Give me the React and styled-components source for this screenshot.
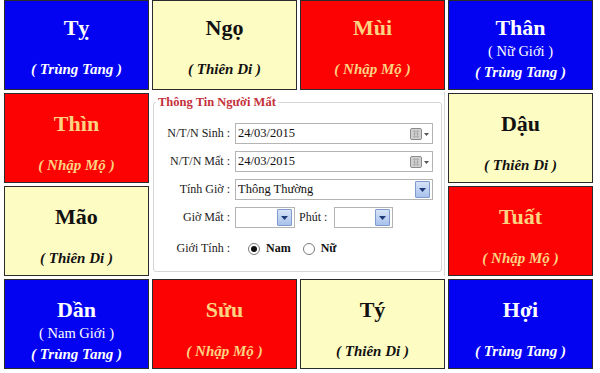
import React from 'react';
import styled, { createGlobalStyle } from 'styled-components';

const serif = '"Liberation Serif", "Times New Roman", "DejaVu Serif", serif';

const GlobalStyle = createGlobalStyle`
  html, body {
    margin: 0;
    padding: 0;
    background: #ffffff;
    font-family: ${serif};
  }
`;

const palette = {
  blue: { bg: '#0303f2', title: '#ffffff', sub: '#ffffff' },
  red: { bg: '#fc0202', title: '#fdd382', sub: '#fdd382' },
  yellow: { bg: '#fdfcc2', title: '#111111', sub: '#111111' },
};

const cells = [
  { name: 'Tỵ', sub: 'Trùng Tang', tone: 'blue', area: '1 / 1' },
  { name: 'Ngọ', sub: 'Thiên Di', tone: 'yellow', area: '1 / 2' },
  { name: 'Mùi', sub: 'Nhập Mộ', tone: 'red', area: '1 / 3' },
  { name: 'Thân', gender: 'Nữ Giới', sub: 'Trùng Tang', tone: 'blue', area: '1 / 4' },
  { name: 'Thìn', sub: 'Nhập Mộ', tone: 'red', area: '2 / 1' },
  { name: 'Dậu', sub: 'Thiên Di', tone: 'yellow', area: '2 / 4' },
  { name: 'Mão', sub: 'Thiên Di', tone: 'yellow', area: '3 / 1' },
  { name: 'Tuất', sub: 'Nhập Mộ', tone: 'red', area: '3 / 4' },
  { name: 'Dần', gender: 'Nam Giới', sub: 'Trùng Tang', tone: 'blue', area: '4 / 1' },
  { name: 'Sửu', sub: 'Nhập Mộ', tone: 'red', area: '4 / 2' },
  { name: 'Tý', sub: 'Thiên Di', tone: 'yellow', area: '4 / 3' },
  { name: 'Hợi', sub: 'Trùng Tang', tone: 'blue', area: '4 / 4' },
];

const Board = styled.div`
  display: grid;
  grid-template-columns: repeat(4, 145px);
  grid-template-rows: repeat(4, 90px);
  gap: 3px;
  padding: 0 0 0 4px;
  width: 600px;
  height: 373px;
  box-sizing: border-box;
  font-family: ${serif};
`;

const Cell = styled.div`
  grid-area: ${(p) => p.$area};
  background: ${(p) => palette[p.$tone].bg};
  border: 1px solid #2b2b2b;
  box-sizing: border-box;
  display: flex;
  flex-direction: column;
  align-items: center;
  padding-top: ${(p) => (p.$row === 1 ? 14 : 17)}px;
  color: ${(p) => palette[p.$tone].title};
  font-family: ${serif};
`;

const Title = styled.div`
  font-family: ${serif};
  font-weight: bold;
  font-size: 22px;
  line-height: 26px;
`;

const Gender = styled.div`
  font-family: ${serif};
  font-size: 14.5px;
  line-height: 18px;
  margin-top: 1px;
`;

const Sub = styled.div`
  font-family: ${serif};
  font-weight: bold;
  font-style: italic;
  font-size: 15px;
  line-height: 18px;
  margin-top: ${(p) => (p.$tight ? 3 : 19)}px;
  color: ${(p) => palette[p.$tone].sub};
`;

const Panel = styled.div`
  grid-area: 2 / 2 / 4 / 4;
  margin: -1px 0 0 -2px;
  background: #ffffff;
  border-right: 1px solid #d8d8d8;
  padding: 3px 3px 4px 3px;
  display: flex;
  font-family: ${serif};
`;

const Fieldset = styled.fieldset`
  flex: 1;
  margin: 0;
  border: 1px solid #d6d6d6;
  border-radius: 3px;
  padding: 8px 8px 0 0;
  display: flex;
  flex-direction: column;
  gap: 7px;
  font-family: ${serif};
`;

const Legend = styled.legend`
  font-family: ${serif};
  color: #c5303a;
  font-weight: bold;
  font-size: 12.5px;
  padding: 0 2px;
  margin-left: 2px;
`;

const Row = styled.div`
  display: flex;
  align-items: center;
  height: 21px;
  margin-top: ${(p) => p.$mt || 0}px;
`;

const Label = styled.span`
  font-family: ${serif};
  width: 76px;
  text-align: right;
  font-size: 12px;
  color: #1a1a1a;
  margin-right: 5px;
  flex-shrink: 0;
`;

const Box = styled.div`
  display: flex;
  align-items: center;
  width: ${(p) => p.$w}px;
  height: ${(p) => p.$h || 21}px;
  border: 1px solid #b4b4b4;
  box-sizing: border-box;
  background: #fff;
  font-family: ${serif};
  font-size: 12.5px;
  color: #111;
  padding: 0 2px 0 2px;
`;

const Value = styled.span`
  flex: 1;
`;

const DropBtn = styled.span`
  width: 13px;
  height: 15px;
  border: 1px solid #7f9bcd;
  border-radius: 1px;
  background: linear-gradient(#d6e3f7, #a9c2ec);
  display: flex;
  align-items: center;
  justify-content: center;
`;

const Small = styled.span`
  font-family: ${serif};
  font-size: 12px;
  color: #1a1a1a;
  margin: 0 7px 0 4px;
`;

const Radio = styled.span`
  width: 12px;
  height: 12px;
  border-radius: 50%;
  border: 1px solid #7c7c7c;
  box-sizing: border-box;
  background: #fff;
  display: flex;
  align-items: center;
  justify-content: center;
  margin: ${(p) => p.$m};
  &::after {
    content: '';
    display: ${(p) => (p.$on ? 'block' : 'none')};
    width: 6px;
    height: 6px;
    border-radius: 50%;
    background: #111;
  }
`;

const RadioText = styled.span`
  font-family: ${serif};
  font-size: 12px;
  font-weight: bold;
  color: #111;
  margin-left: 6px;
`;

const Calendar = () => (
  <svg width="20" height="12" viewBox="0 0 20 12">
    <rect x="0.5" y="0.5" width="11" height="11" rx="1.5" fill="#d0d0d0" stroke="#8c8c8c" />
    <path d="M3 3.5h6M3 6h6M3 8.5h6M4.5 2v8M7.5 2v8" stroke="#a8a8a8" strokeWidth="0.8" />
    <path d="M14 5h5l-2.5 3z" fill="#555" />
  </svg>
);

const Arrow = () => (
  <svg width="7" height="4" viewBox="0 0 7 4">
    <path d="M0 0h7L3.5 4z" fill="#1f3a78" />
  </svg>
);

const Select = ({ w, value }) => (
  <Box $w={w}>
    <Value>{value}</Value>
    <DropBtn>
      <Arrow />
    </DropBtn>
  </Box>
);

const DateInput = ({ value }) => (
  <Box $w={198}>
    <Value>{value}</Value>
    <Calendar />
  </Box>
);

const CellView = ({ c }) => {
  const row = Number(c.area.split('/')[0]);
  return (
    <Cell $area={c.area} $tone={c.tone} $row={row}>
      <Title>{c.name}</Title>
      {c.gender && <Gender>( {c.gender} )</Gender>}
      <Sub $tone={c.tone} $tight={!!c.gender}>
        ( {c.sub} )
      </Sub>
    </Cell>
  );
};

export default function App() {
  return (
    <>
      <GlobalStyle />
      <Board>
        {cells.map((c) => (
          <CellView key={c.name} c={c} />
        ))}
        <Panel>
          <Fieldset>
            <Legend>Thông Tin Người Mất</Legend>
            <Row $mt={5}>
              <Label>N/T/N Sinh :</Label>
              <DateInput value="24/03/2015" />
            </Row>
            <Row>
              <Label>N/T/N Mất :</Label>
              <DateInput value="24/03/2015" />
            </Row>
            <Row>
              <Label>Tính Giờ :</Label>
              <Select w={198} value="Thông Thường" />
            </Row>
            <Row>
              <Label>Giờ Mất :</Label>
              <Select w={60} value="" />
              <Small>Phút :</Small>
              <Select w={59} value="" />
            </Row>
            <Row $mt={3}>
              <Label>Giới Tính :</Label>
              <Radio $on $m="0 0 0 13px" />
              <RadioText>Nam</RadioText>
              <Radio $m="0 0 0 12px" />
              <RadioText>Nữ</RadioText>
            </Row>
          </Fieldset>
        </Panel>
      </Board>
    </>
  );
}
